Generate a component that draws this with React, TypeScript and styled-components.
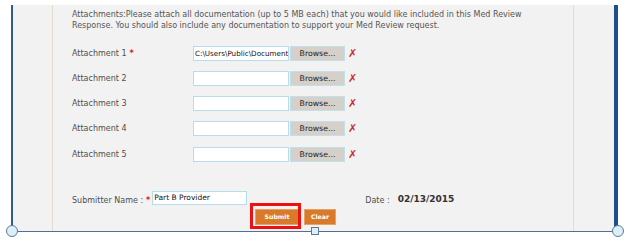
import React from 'react'
import styled, { createGlobalStyle } from 'styled-components'

const GlobalStyle = createGlobalStyle`
    html, body {
        margin: 0;
        padding: 0;
        background: #ffffff;
    }
    body {
        width: 629px;
        height: 242px;
        overflow: hidden;
        font-family: "DejaVu Sans", Verdana, sans-serif;
    }
`

const attachments = [
    { label: 'Attachment 1', required: true, value: 'C:\\Users\\Public\\Document' },
    { label: 'Attachment 2', required: false, value: '' },
    { label: 'Attachment 3', required: false, value: '' },
    { label: 'Attachment 4', required: false, value: '' },
    { label: 'Attachment 5', required: false, value: '' },
]

export const App = () => {
    return (
        <Stage>
            <GlobalStyle />
            <Frame>
                <Column>
                    <Intro>
                        Attachments:Please attach all documentation (up to 5 MB each) that you would like included in this Med Review
                        <br />
                        Response. You should also include any documentation to support your Med Review request.
                    </Intro>

                    <Rows>
                        {attachments.map((a) => (
                            <Row key={a.label}>
                                <Label>
                                    {a.label}
                                    {a.required && <Star>*</Star>}
                                </Label>
                                <FileBox>{a.value}</FileBox>
                                <Browse>Browse...</Browse>
                                <Remove>✗</Remove>
                            </Row>
                        ))}
                    </Rows>

                    <SubmitterRow>
                        <Label $inline>Submitter Name :</Label>
                        <Star $gap>*</Star>
                        <NameBox>Part B Provider</NameBox>
                        <DateLabel>Date :</DateLabel>
                        <DateValue>02/13/2015</DateValue>
                    </SubmitterRow>

                    <Actions>
                        <ActionButton $width={44} $highlight>Submit</ActionButton>
                        <ActionButton $width={32}>Clear</ActionButton>
                    </Actions>
                </Column>

                <Handle $shape="circle" $left={-7} />
                <Handle $shape="square" $left={298} />
                <Handle $shape="circle" $left={599} />
            </Frame>
        </Stage>
    )
}

const Stage = styled.div`
    padding: 5px 0 0 11px;
`

const Frame = styled.div`
    position: relative;
    width: 601px;
    height: 226px;
    background: #f2f2f2;
    border-left: 2px solid #2c5d95;
    border-right: 4px solid #1e4f8c;
    border-bottom: 1px solid #4d6f98;
    display: flex;
`

const Column = styled.div`
    margin-left: 39px;
    width: 522px;
    height: 100%;
    box-sizing: border-box;
    border-left: 1px solid #e3dccd;
    border-right: 1px solid #e3dccd;
    padding: 4px 0 0 19px;
    display: flex;
    flex-direction: column;
`

const Intro = styled.p`
    margin: 0;
    font-size: 8px;
    line-height: 11px;
    color: #555555;
    white-space: nowrap;
`

const Rows = styled.div`
    display: flex;
    flex-direction: column;
    gap: 10.25px;
    margin-top: 14.5px;
`

const Row = styled.div`
    display: flex;
    align-items: center;
    height: 15px;
`

const Label = styled.span<{ $inline?: boolean }>`
    width: ${(p) => (p.$inline ? 'auto' : '121px')};
    font-size: 8px;
    color: #4f4f4f;
    white-space: nowrap;
`

const Star = styled.span<{ $gap?: boolean }>`
    color: #e0161d;
    font-weight: bold;
    font-size: 8px;
    margin-left: 3px;
    margin-right: ${(p) => (p.$gap ? '2px' : '0')};
`

const FileBox = styled.div`
    width: 96px;
    height: 15px;
    box-sizing: border-box;
    background: #ffffff;
    border: 1px solid #b7dcea;
    font-size: 7.2px;
    line-height: 13px;
    color: #111111;
    padding-left: 1px;
    overflow: hidden;
    white-space: nowrap;
`

const Browse = styled.div`
    width: 55px;
    height: 15px;
    box-sizing: border-box;
    margin-left: 1px;
    background: #d5d0c9;
    border: 1px solid #c3e0ea;
    font-size: 7.8px;
    line-height: 13px;
    text-align: center;
    color: #222222;
`

const Remove = styled.span`
    margin-left: 3px;
    font-size: 11px;
    font-weight: bold;
    font-style: italic;
    color: #c8282a;
    line-height: 15px;
`

const SubmitterRow = styled.div`
    display: flex;
    align-items: flex-end;
    margin-top: 29px;
    height: 14px;
`

const NameBox = styled.div`
    width: 95px;
    height: 14px;
    box-sizing: border-box;
    background: #ffffff;
    border: 1px solid #b7dcea;
    font-size: 7.5px;
    line-height: 12px;
    color: #111111;
    padding-left: 1px;
`

const DateLabel = styled.span`
    margin-left: 118px;
    font-size: 8px;
    color: #4f4f4f;
`

const DateValue = styled.span`
    margin-left: 8px;
    font-size: 9px;
    font-weight: bold;
    color: #333333;
    position: relative;
    top: -1px;
`

const Actions = styled.div`
    display: flex;
    gap: 5px;
    margin: 4px 0 0 183px;
`

const ActionButton = styled.div<{ $width: number; $highlight?: boolean }>`
    position: relative;
    width: ${(p) => p.$width}px;
    height: 16px;
    box-sizing: border-box;
    background: #d97a2b;
    border: 1px solid #e9a066;
    color: #ffffff;
    font-size: 6.2px;
    font-weight: bold;
    line-height: 14px;
    text-align: center;

    ${(p) =>
        p.$highlight &&
        `
        &::after {
            content: '';
            position: absolute;
            left: -6px;
            right: -3px;
            top: -7px;
            bottom: -5px;
            border: 3px solid #ee1111;
        }
    `}
`

const Handle = styled.span<{ $shape: 'circle' | 'square'; $left: number }>`
    position: absolute;
    left: ${(p) => p.$left}px;
    bottom: ${(p) => (p.$shape === 'circle' ? '-6px' : '-4px')};
    width: ${(p) => (p.$shape === 'circle' ? '10px' : '6px')};
    height: ${(p) => (p.$shape === 'circle' ? '10px' : '6px')};
    border-radius: ${(p) => (p.$shape === 'circle' ? '50%' : '0')};
    background: #dceff7;
    border: 1px solid #5d7a99;
`

export default App
